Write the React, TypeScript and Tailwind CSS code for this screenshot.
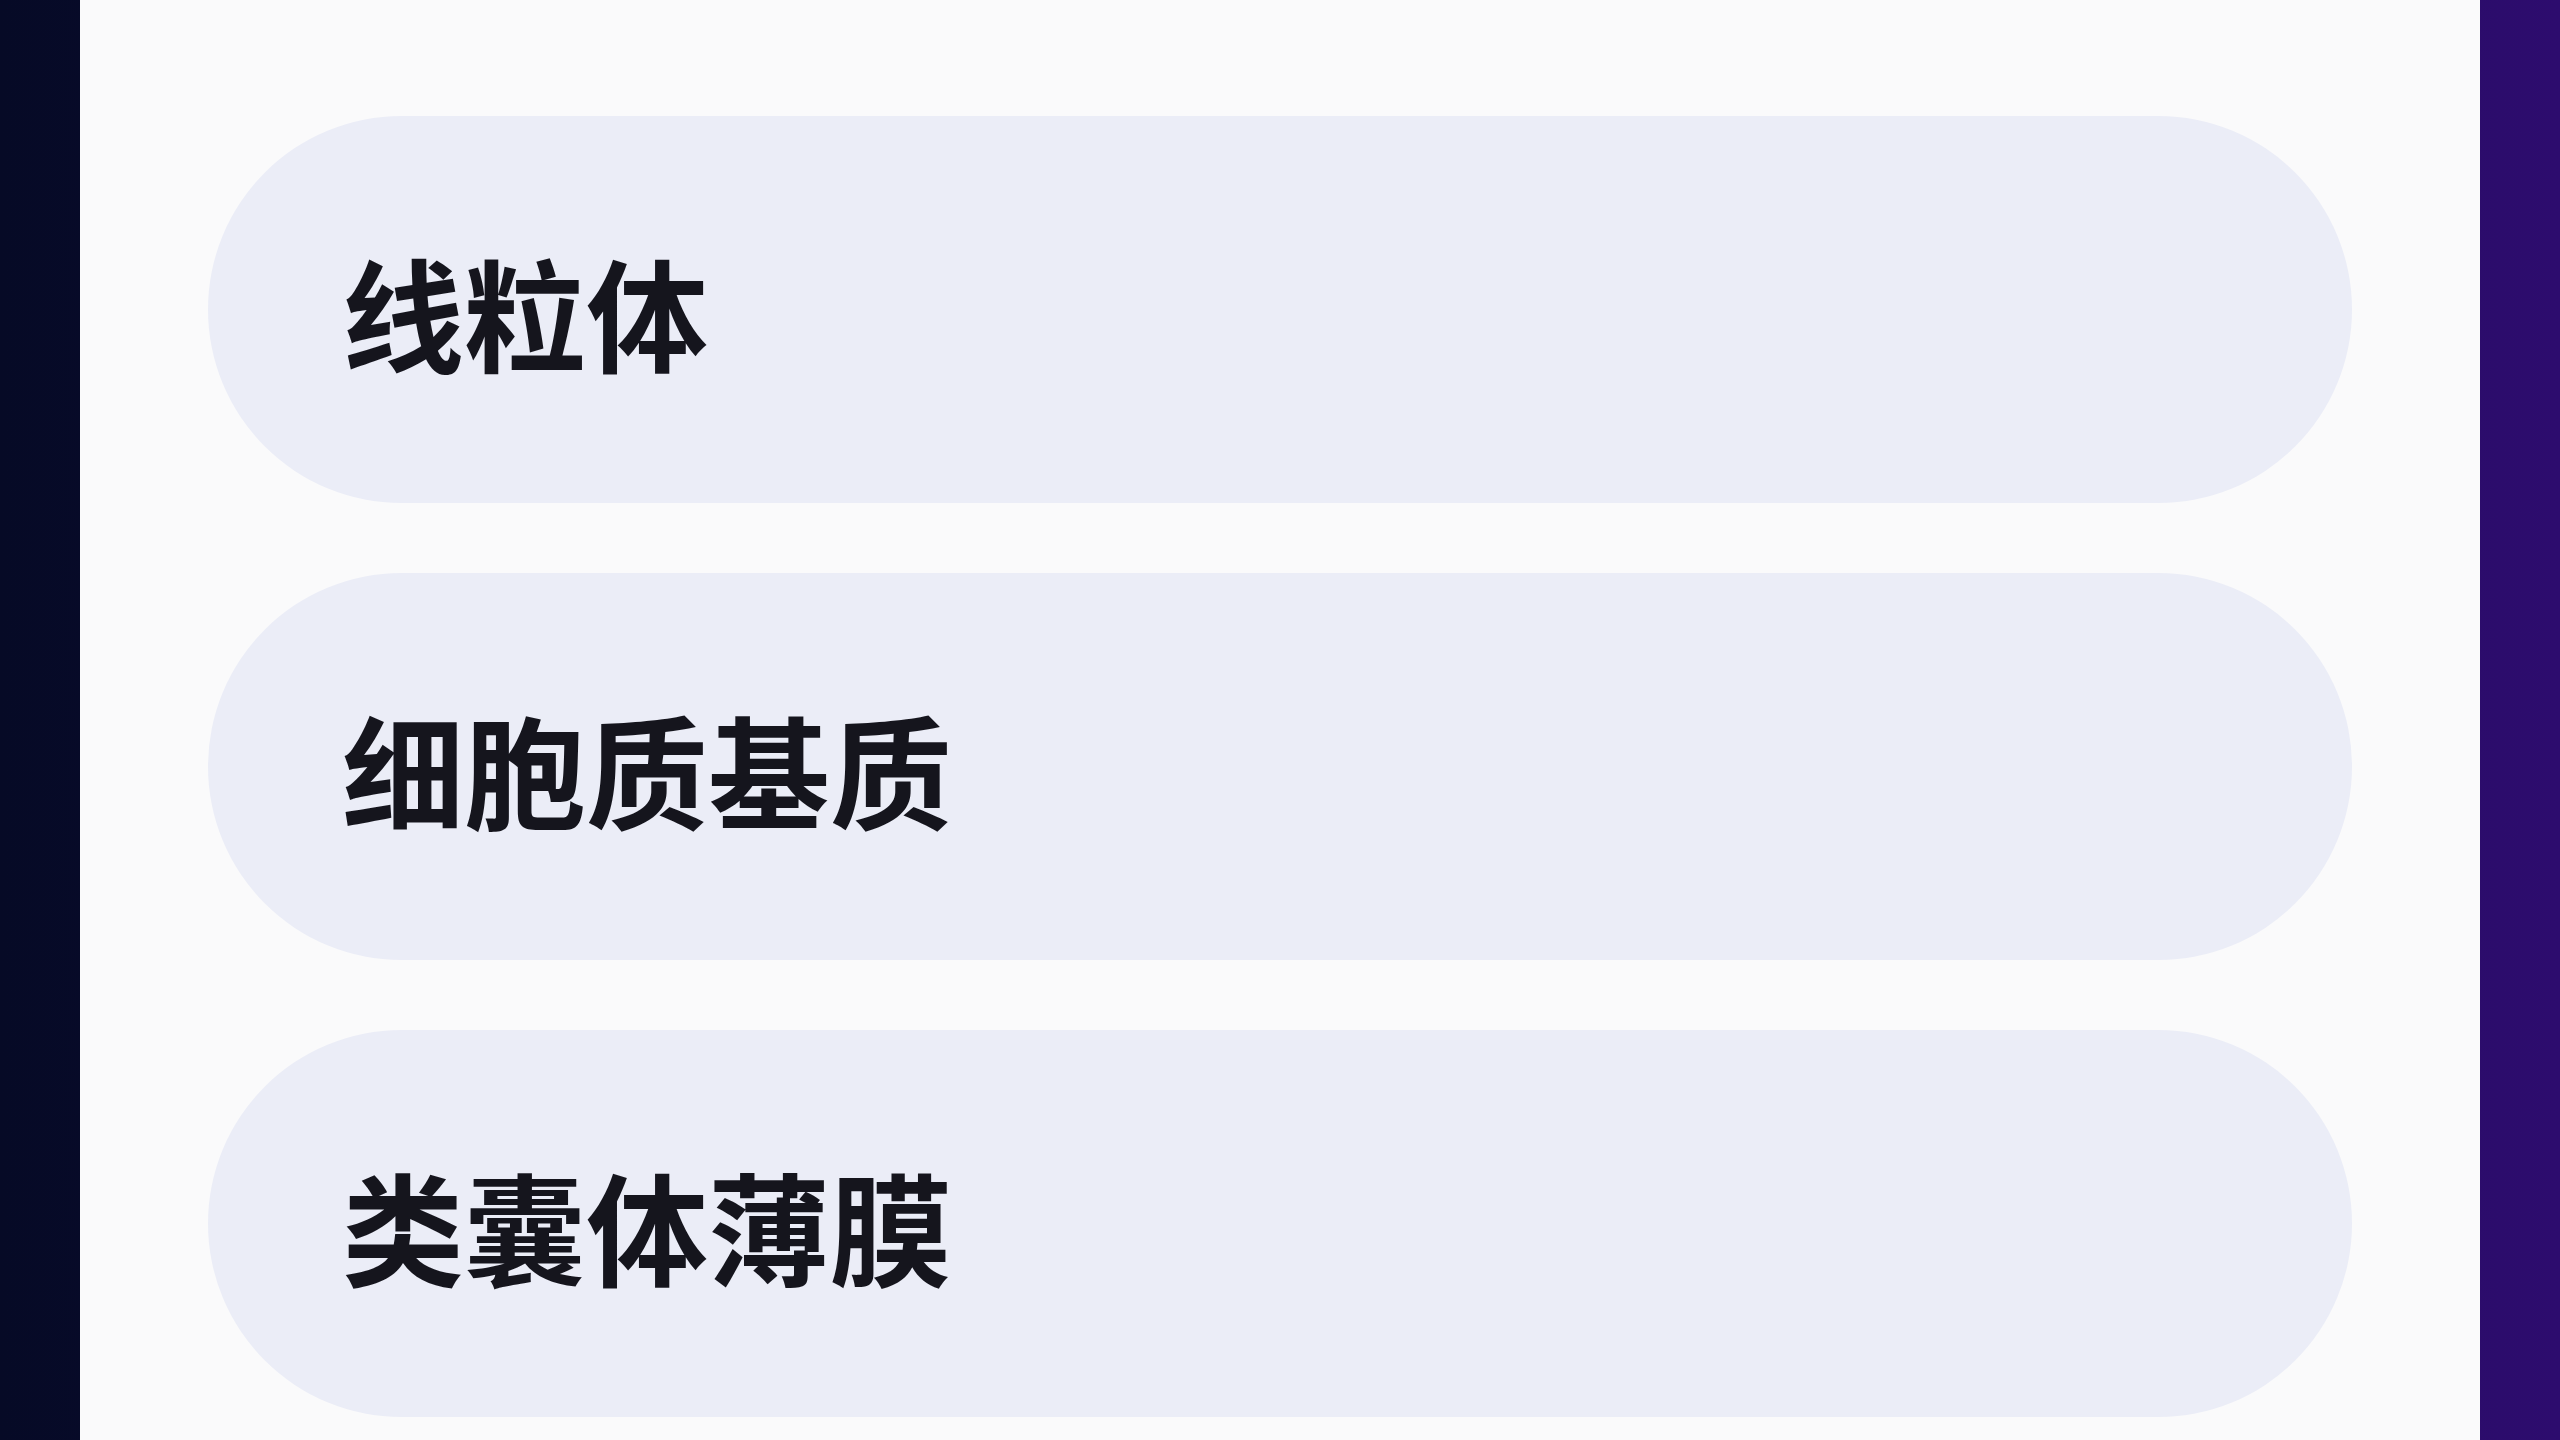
import React from "react";

const items = ["线粒体", "细胞质基质", "类囊体薄膜"];

export default function App() {
  return (
    <div className="w-full h-[1440px] overflow-hidden bg-gradient-to-r from-[#060a26] via-[#170b48] to-[#2d0c6e] px-[80px] flex">
      <div className="flex-1 h-full bg-[#fafafb] flex flex-col pt-[116px] px-[128px] gap-[70px]">
        {items.map((t) => (
          <div
            key={t}
            className="h-[387px] shrink-0 rounded-full bg-[#ebedf7] flex items-center pl-[134px]"
          >
            <span
              className="text-[122px] leading-none font-semibold text-[#15151d]"
              style={{ fontFamily: '"Noto Sans CJK SC", "Noto Sans", sans-serif' }}
            >
              {t}
            </span>
          </div>
        ))}
      </div>
    </div>
  );
}
